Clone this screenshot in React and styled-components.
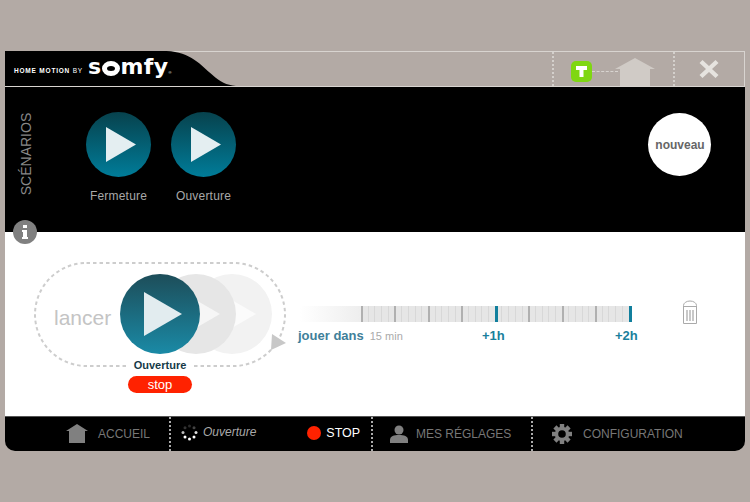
import React from "react";
import styled, { createGlobalStyle } from "styled-components";

const Global = createGlobalStyle`
  html, body { margin: 0; padding: 0; background: #b3aaa5; }
  body { font-family: "Liberation Sans", Arial, sans-serif; }
`;

const Page = styled.div`
  width: 750px; height: 502px; box-sizing: border-box; overflow: hidden;
  padding: 51px 5px 0; background: #b3aaa5; display: flex; flex-direction: column;
`;

/* Header */
const Header = styled.header`
  position: relative; height: 36px; box-sizing: border-box; display: flex; align-items: stretch;
  border-top: 1px solid #d8d4d0; border-right: 1px solid #d8d4d0; border-bottom: 1px solid #d8d4d0;
`;
const LogoShape = styled.svg`
  position: absolute; left: 0; top: -1px; width: 231px; height: 35px;
`;
const LogoArea = styled.div`
  position: relative; width: 547px; display: flex; align-items: center; padding-left: 9px; box-sizing: border-box; gap: 5px;
`;
const Tagline = styled.span`
  font-size: 6.5px; font-weight: 700; letter-spacing: 0.8px; color: #fff; white-space: nowrap; padding-top: 2px;
`;
const LightBy = styled.span`font-weight: 400;`;
const Brand = styled.span`
  display: flex; align-items: center; font-family: "DejaVu Sans", sans-serif; font-weight: 700; font-size: 22px;
  color: #fff; line-height: 1; letter-spacing: 0.4px; height: 24px; margin-top: -5px;
`;
const BrandRing = styled.span`
  width: 8px; height: 5px; border: 5px solid #fff; border-radius: 50%; margin: 4px 1px 0 0; background: transparent;
`;
const Reg = styled.sup`font-size: 4px; font-family: "Liberation Sans", sans-serif; font-weight: 400; margin-top: 13px;`;
const HeaderCell = styled.div`
  box-sizing: border-box; display: flex; align-items: center; height: 100%;
  border-left: 2px dotted #d4d0cc; position: relative;
`;
const StatusCell = styled(HeaderCell)`width: 121px; padding-left: 17px;`;
const CloseCell = styled(HeaderCell)`flex: 1; justify-content: center; padding-right: 2px;`;
const Gate = styled.div`
  width: 21px; height: 21px; border-radius: 5px; background: #7fd712; display: flex; align-items: center; justify-content: center;
  margin-top: 5px; flex: none;
`;
const Dash = styled.div`width: 26px; border-top: 1px dashed #d8d4d0; margin-top: 5px; flex: none;`;
const RoofHouse = styled.svg`width: 40px; height: 28px; margin: 6px 0 0 -3px; flex: none; display: block;`;
const Icon = styled.svg`display: block; flex: none;`;
const PlayMark = styled(Icon)`margin-left: ${p => p.$nudge || 0}px;`;

/* Scenarios */
const Scenarios = styled.section`
  position: relative; height: 145px; background: #000; display: flex; padding: 25px 34px 0 0; box-sizing: border-box;
`;
const SideTitle = styled.div`
  width: 81px; height: 82px; display: flex; align-items: center; justify-content: center; flex: none;
  color: #888; font-size: 14px; margin-top: 1px; padding-right: 38px; box-sizing: border-box;
  span { display: block; transform: rotate(-90deg); white-space: nowrap; }
`;
const ScenarioList = styled.div`display: flex; gap: 20px; flex: 1;`;
const Scenario = styled.div`
  width: 65px; display: flex; flex-direction: column; align-items: center; gap: 12px;
`;
const Disc = styled.div`
  width: ${p => p.$size}px; height: ${p => p.$size}px; border-radius: 50%; flex: none;
  background: linear-gradient(#07424d, #007c99); display: flex; align-items: center; justify-content: center;
`;
const Caption = styled.div`color: #a8a8a8; font-size: 12px; line-height: 14px; white-space: nowrap; letter-spacing: 0.2px;`;
const NewButton = styled.div`
  width: 63px; height: 63px; border-radius: 50%; background: #fff; color: #666; font-size: 12px; font-weight: 700;
  display: flex; align-items: center; justify-content: center; margin-top: 1px; padding-left: 1px; box-sizing: border-box;
`;
const InfoBadge = styled.div`
  position: absolute; left: 8px; bottom: -12px; width: 24px; height: 24px; border-radius: 50%; background: #808080;
  display: flex; align-items: center; justify-content: center; z-index: 2;
`;

/* Player */
const Player = styled.section`
  height: 184px; background: #fff; box-sizing: border-box; display: flex; padding: 30px 0 0 29px;
`;
const Launcher = styled.div`
  position: relative; width: 252px; height: 105px; box-sizing: border-box; flex: none; display: flex; align-items: center;
`;
const Loop = styled.svg`position: absolute; left: 0; top: 0; width: 252px; height: 105px;`;
const Lancer = styled.div`
  position: absolute; left: 20px; top: 44px; font-size: 21px; line-height: 24px; color: #c4c4c4;
`;
const Ghost = styled.div`
  position: absolute; top: 12px; left: ${p => p.$left}px; width: 80px; height: 80px; border-radius: 50%; background: ${p => p.$bg};
  display: flex; align-items: center; justify-content: center;
`;
const Active = styled.div`
  position: absolute; top: 12px; left: 86px; width: 80px; height: 80px; border-radius: 50%;
  background: linear-gradient(#1d4d59, #1a8aa6); display: flex; align-items: center; justify-content: center;
`;
const ActiveLabel = styled.div`
  position: absolute; left: 94px; top: 96px; width: 64px; background: #fff; text-align: center;
  font-size: 11px; font-weight: 700; line-height: 14px; color: #153a48;
`;
const StopPill = styled.div`
  position: absolute; left: 94px; top: 114px; width: 64px; height: 17px; border-radius: 9px; background: #ff2200;
  color: #fff; font-size: 13px; line-height: 18px; text-align: center;
`;
const CornerArrow = styled.svg`position: absolute; left: 237px; top: 72px;`;
const Timing = styled.div`
  width: 340px; margin: 44px 0 0 10px; flex: none;
`;
const Track = styled.div`
  display: flex; height: 16px; width: 332px; margin-left: 4px;
  background: linear-gradient(90deg, #fff 0, #eeeeee 60px, #eeeeee 61px, #e6e6e6 62px);
`;
const TrackFade = styled.div`width: 61px; flex: none;`;
const Cell = styled.div`
  flex: none; width: ${p => p.$w}px; box-sizing: border-box;
  border-left: ${p => p.$t}px solid ${p => p.$c};
`;
const Scale = styled.div`
  display: flex; align-items: center; height: 17px; margin-top: 5px; padding-left: 2px; position: relative;
`;
const PlayIn = styled.span`font-size: 13px; font-weight: 700; color: #3f7f9a; margin-right: 6px;`;
const Mins = styled.span`font-size: 11px; color: #aaa;`;
const Hour = styled.span`
  position: absolute; left: ${p => p.$left}px; font-size: 13px; font-weight: 700; color: #1a7f9c;
`;
const Trash = styled.svg`display: block; flex: none; margin: 38px 0 0 46px;`;

/* Footer */
const Footer = styled.footer`
  height: 35px; background: #000; border-top: 1px solid #555; border-radius: 0 0 10px 10px; box-sizing: border-box;
  display: flex; align-items: stretch; color: #777; font-size: 12px;
`;
const FootCell = styled.div`
  position: relative; display: flex; align-items: center; box-sizing: border-box; flex: none; height: 100%;
  width: ${p => p.$w}px; padding-left: ${p => p.$pl}px; gap: ${p => p.$gap}px;
  ${p => p.$sep ? "border-left: 2px dotted #aaa;" : ""}
`;
const FootText = styled.span`white-space: nowrap;`;
const Running = styled.span`font-style: italic; color: #aaa; white-space: nowrap; margin-top: -4px;`;
const StopDot = styled.span`width: 14px; height: 14px; border-radius: 50%; background: #ff2200; flex: none;`;
const StopText = styled.span`color: #fff; white-space: nowrap; font-size: 12.5px;`;
const StopGroup = styled.div`display: flex; align-items: center; gap: 5px; margin-left: 46px; margin-top: -3px;`;
const Spinner = styled(Icon)`margin-top: -3px;`;

const Triangle = ({ w, h, fill, nudge }) => (
  <PlayMark width={w} height={h} viewBox="0 0 30 35" preserveAspectRatio="none" $nudge={nudge}>
    <polygon points="0,0 30,17.5 0,35" fill={fill} />
  </PlayMark>
);

const ticks = Array.from({ length: 41 }, (_, i) => {
  if (i === 20 || i === 40) return { t: 3, c: "#117f9d" };
  if (i % 5 === 0) return { t: 2, c: "#b0b0b0" };
  return { t: 1, c: "#d8d8d8" };
});

const dots = [
  [8.5, 2, "#2a2a2a"], [13, 3.8, "#444"], [15, 8.5, "#ddd"], [13, 13, "#fff"], [8.5, 15, "#fff"],
  [4, 13, "#fff"], [2, 8.5, "#bbb"], [4, 3.8, "#333"],
];

export default function App() {
  return (
    <Page>
      <Global />
      <Header>
        <LogoShape viewBox="0 0 236 35" preserveAspectRatio="none">
          <path d="M0 0 H165 C190 1 200 14 212 24 C220 31 226 34 236 35 H0 Z" fill="#000" />
        </LogoShape>
        <LogoArea>
          <Tagline>HOME MOTION <LightBy>BY</LightBy></Tagline>
          <Brand>s<BrandRing />mfy<Reg>®</Reg></Brand>
        </LogoArea>
        <StatusCell>
          <Gate>
            <Icon width="13" height="13" viewBox="0 0 13 13"><path d="M1 1 H12 V5 H8.5 V12 H4.5 V5 H1 Z" fill="#fff" /></Icon>
          </Gate>
          <Dash />
          <RoofHouse viewBox="0 0 40 28"><path d="M20 0 L40 11 H35 V28 H5 V11 H0 Z" fill="#d0cbc6" /></RoofHouse>
        </StatusCell>
        <CloseCell>
          <Icon width="20" height="20" viewBox="0 0 20 20"><path d="M3.5 1 L10 7 L16.5 1 L19.5 4 L13 10 L19.5 16 L16.5 19 L10 13 L3.5 19 L.5 16 L7 10 L.5 4 Z" fill="#e6e3df" /></Icon>
        </CloseCell>
      </Header>

      <Scenarios>
        <SideTitle><span>SCÉNARIOS</span></SideTitle>
        <ScenarioList>
          {["Fermeture", "Ouverture"].map(n => (
            <Scenario key={n}>
              <Disc $size={65}><Triangle w={30} h={35} fill="#e4eef1" nudge={5} /></Disc>
              <Caption>{n}</Caption>
            </Scenario>
          ))}
        </ScenarioList>
        <NewButton>nouveau</NewButton>
        <InfoBadge>
          <Icon width="6" height="14" viewBox="0 0 6 14"><path d="M1 0 H5 V3 H1 Z M0 5 H5 V12 H6 V14 H0 V12 H1 V7 H0 Z" fill="#fff" /></Icon>
        </InfoBadge>
      </Scenarios>

      <Player>
        <Launcher>
          <Loop viewBox="0 0 252 105">
            <rect x="1" y="1" width="250" height="103" rx="51.5" fill="none" stroke="#cdcdcd" strokeWidth="2" strokeDasharray="3.5 3" />
          </Loop>
          <Lancer>lancer</Lancer>
          <Ghost $left={158} $bg="#f2f2f2"><Triangle w={38} h={44} fill="#fbfbfb" nudge={10} /></Ghost>
          <Ghost $left={122} $bg="#e6e6e6"><Triangle w={38} h={44} fill="#f6f6f6" nudge={10} /></Ghost>
          <Active><Triangle w={38} h={44} fill="#e2ecef" nudge={6} /></Active>
          <ActiveLabel>Ouverture</ActiveLabel>
          <StopPill>stop</StopPill>
          <CornerArrow width="15" height="16" viewBox="0 0 15 16"><polygon points="1,0 15,9 0,16" fill="#c8c8c8" /></CornerArrow>
        </Launcher>
        <Timing>
          <Track>
            <TrackFade />
            {ticks.map((k, i) => <Cell key={i} $w={i === 40 ? 3 : 6.7} $t={k.t} $c={k.c} />)}
          </Track>
          <Scale>
            <PlayIn>jouer dans</PlayIn>
            <Mins>15 min</Mins>
            <Hour $left={186}>+1h</Hour>
            <Hour $left={319}>+2h</Hour>
          </Scale>
        </Timing>
        <Trash width="16" height="25" viewBox="0 0 16 25">
          <path d="M1.5 10 V5.5 A6.5 4.5 0 0 1 14.5 5.5 V10 M1 6.5 H15 M1.5 6.5 V23.5 H14.5 V6.5" fill="none" stroke="#aaa" />
          <path d="M4 10 H6 V21 H4 Z M7 10 H9 V21 H7 Z M10 10 H12 V21 H10 Z" fill="#c8c8c8" />
        </Trash>
      </Player>

      <Footer>
        <FootCell $w={164} $pl={61} $gap={10}>
          <Icon width="22" height="20" viewBox="0 0 22 20"><path d="M11 0 L22 7 H19 V19 H3 V7 H0 Z" fill="#808080" /></Icon>
          <FootText>ACCUEIL</FootText>
        </FootCell>
        <FootCell $w={202} $pl={10} $gap={5} $sep>
          <Spinner width="17" height="17" viewBox="0 0 17 17">
            {dots.map(([x, y, c], i) => <circle key={i} cx={x} cy={y} r="1.5" fill={c} />)}
          </Spinner>
          <Running>Ouverture</Running>
          <StopGroup><StopDot /><StopText>STOP</StopText></StopGroup>
        </FootCell>
        <FootCell $w={160} $pl={17} $gap={8} $sep>
          <Icon width="18" height="18" viewBox="0 0 18 18"><circle cx="9" cy="5" r="4.5" fill="#808080" /><path d="M0 18 V15 C0 11 4 10 9 10 S18 11 18 15 V18 Z" fill="#808080" /></Icon>
          <FootText>MES RÉGLAGES</FootText>
        </FootCell>
        <FootCell $w={200} $pl={19} $gap={11} $sep>
          <Icon width="20" height="20" viewBox="0 0 20 20">
            <g fill="#808080">
              {[0, 45, 90, 135, 180, 225, 270, 315].map(a => <rect key={a} x="7.8" y="0" width="4.4" height="5" transform={`rotate(${a} 10 10)`} />)}
            </g>
            <circle cx="10" cy="10" r="5.5" fill="none" stroke="#808080" strokeWidth="3.4" />
          </Icon>
          <FootText>CONFIGURATION</FootText>
        </FootCell>
      </Footer>
    </Page>
  );
}
